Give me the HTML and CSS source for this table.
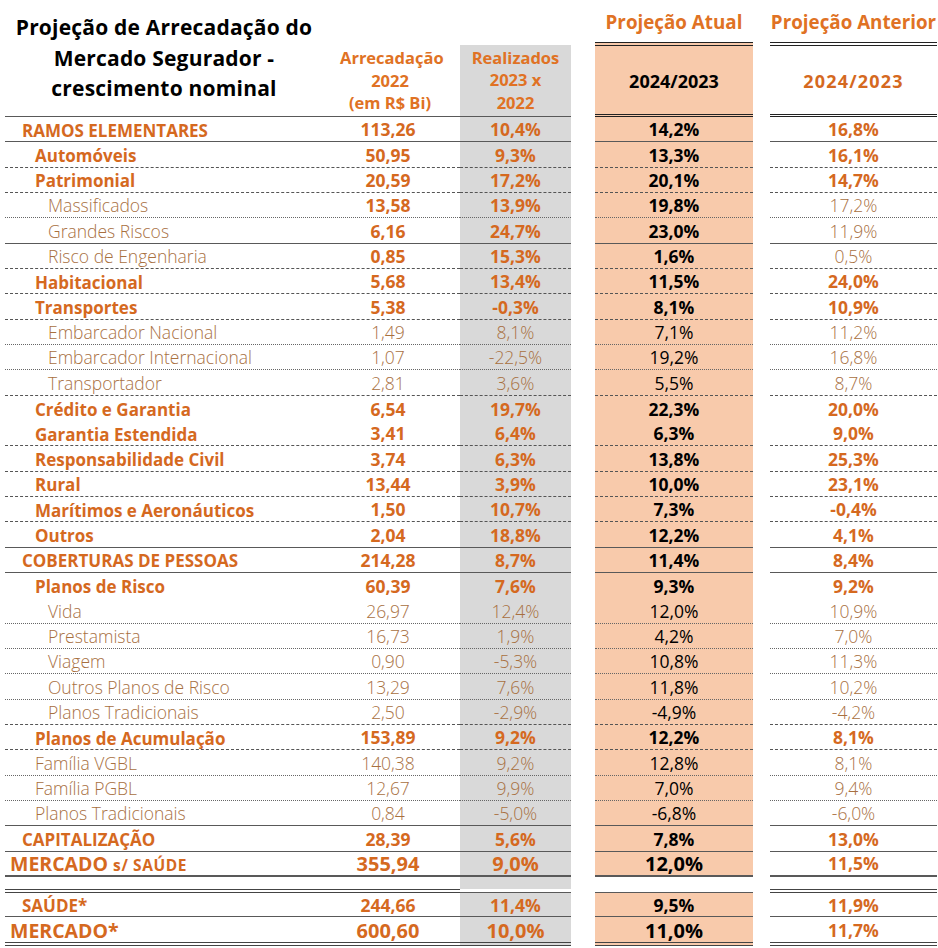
FILE: index.html
```html
<!DOCTYPE html>
<html lang="pt-BR">
<head>
<meta charset="utf-8">
<title>Projeção de Arrecadação do Mercado Segurador</title>
<link rel="stylesheet" href="styles.css">
</head>
<body>
<div class="sheet">
  <div class="head">
    <div class="h-main">
      <div class="title">Projeção de Arrecadação do<br>Mercado Segurador -<br>crescimento nominal</div>
      <div class="h-arrec">Arrecadação<br>2022<br>(em R$ Bi)</div>
    </div>
    <div class="h-gray">Realizados<br>2023 x<br>2022</div>
    <div class="h-gap"></div>
    <div class="h-top h-top-p">Projeção Atual</div>
    <div class="h-gap2"></div>
    <div class="h-top h-top-a">Projeção Anterior</div>
    <div class="h-peach">2024/2023</div>
    <div class="h-ant">2024/2023</div>
  </div>

  <div class="row solid"><div class="c main l0"><span class="lab b">RAMOS ELEMENTARES</span><span class="val b">113,26</span></div><div class="c gray b">10,4%</div><div class="gap"></div><div class="c peach b">14,2%</div><div class="gap"></div><div class="c ant b">16,8%</div></div>
  <div class="row dash"><div class="c main l1"><span class="lab b">Automóveis</span><span class="val b">50,95</span></div><div class="c gray b">9,3%</div><div class="gap"></div><div class="c peach b">13,3%</div><div class="gap"></div><div class="c ant b">16,1%</div></div>
  <div class="row dash"><div class="c main l1"><span class="lab b">Patrimonial</span><span class="val b">20,59</span></div><div class="c gray b">17,2%</div><div class="gap"></div><div class="c peach b">20,1%</div><div class="gap"></div><div class="c ant b">14,7%</div></div>
  <div class="row dot"><div class="c main l2"><span class="lab lt">Massificados</span><span class="val b">13,58</span></div><div class="c gray b">13,9%</div><div class="gap"></div><div class="c peach b">19,8%</div><div class="gap"></div><div class="c ant lt">17,2%</div></div>
  <div class="row solid"><div class="c main l2"><span class="lab lt">Grandes Riscos</span><span class="val b">6,16</span></div><div class="c gray b">24,7%</div><div class="gap"></div><div class="c peach b">23,0%</div><div class="gap"></div><div class="c ant lt">11,9%</div></div>
  <div class="row dash"><div class="c main l2"><span class="lab lt">Risco de Engenharia</span><span class="val b">0,85</span></div><div class="c gray b">15,3%</div><div class="gap"></div><div class="c peach b">1,6%</div><div class="gap"></div><div class="c ant lt">0,5%</div></div>
  <div class="row dash"><div class="c main l1"><span class="lab b">Habitacional</span><span class="val b">5,68</span></div><div class="c gray b">13,4%</div><div class="gap"></div><div class="c peach b">11,5%</div><div class="gap"></div><div class="c ant b">24,0%</div></div>
  <div class="row dash"><div class="c main l1"><span class="lab b">Transportes</span><span class="val b">5,38</span></div><div class="c gray b">-0,3%</div><div class="gap"></div><div class="c peach b">8,1%</div><div class="gap"></div><div class="c ant b">10,9%</div></div>
  <div class="row dot"><div class="c main l2"><span class="lab lt">Embarcador Nacional</span><span class="val lt">1,49</span></div><div class="c gray lt">8,1%</div><div class="gap"></div><div class="c peach lt">7,1%</div><div class="gap"></div><div class="c ant lt">11,2%</div></div>
  <div class="row dot"><div class="c main l2"><span class="lab lt">Embarcador Internacional</span><span class="val lt">1,07</span></div><div class="c gray lt">-22,5%</div><div class="gap"></div><div class="c peach lt">19,2%</div><div class="gap"></div><div class="c ant lt">16,8%</div></div>
  <div class="row dash"><div class="c main l2"><span class="lab lt">Transportador</span><span class="val lt">2,81</span></div><div class="c gray lt">3,6%</div><div class="gap"></div><div class="c peach lt">5,5%</div><div class="gap"></div><div class="c ant lt">8,7%</div></div>
  <div class="row none"><div class="c main l1"><span class="lab b">Crédito e Garantia</span><span class="val b">6,54</span></div><div class="c gray b">19,7%</div><div class="gap"></div><div class="c peach b">22,3%</div><div class="gap"></div><div class="c ant b">20,0%</div></div>
  <div class="row dash"><div class="c main l1"><span class="lab b">Garantia Estendida</span><span class="val b">3,41</span></div><div class="c gray b">6,4%</div><div class="gap"></div><div class="c peach b">6,3%</div><div class="gap"></div><div class="c ant b">9,0%</div></div>
  <div class="row dash"><div class="c main l1"><span class="lab b">Responsabilidade Civil</span><span class="val b">3,74</span></div><div class="c gray b">6,3%</div><div class="gap"></div><div class="c peach b">13,8%</div><div class="gap"></div><div class="c ant b">25,3%</div></div>
  <div class="row dash"><div class="c main l1"><span class="lab b">Rural</span><span class="val b">13,44</span></div><div class="c gray b">3,9%</div><div class="gap"></div><div class="c peach b">10,0%</div><div class="gap"></div><div class="c ant b">23,1%</div></div>
  <div class="row dash"><div class="c main l1"><span class="lab b">Marítimos e Aeronáuticos</span><span class="val b">1,50</span></div><div class="c gray b">10,7%</div><div class="gap"></div><div class="c peach b">7,3%</div><div class="gap"></div><div class="c ant b">-0,4%</div></div>
  <div class="row solid"><div class="c main l1"><span class="lab b">Outros</span><span class="val b">2,04</span></div><div class="c gray b">18,8%</div><div class="gap"></div><div class="c peach b">12,2%</div><div class="gap"></div><div class="c ant b">4,1%</div></div>
  <div class="row solid"><div class="c main l0"><span class="lab b">COBERTURAS DE PESSOAS</span><span class="val b">214,28</span></div><div class="c gray b">8,7%</div><div class="gap"></div><div class="c peach b">11,4%</div><div class="gap"></div><div class="c ant b">8,4%</div></div>
  <div class="row none"><div class="c main l1"><span class="lab b">Planos de Risco</span><span class="val b">60,39</span></div><div class="c gray b">7,6%</div><div class="gap"></div><div class="c peach b">9,3%</div><div class="gap"></div><div class="c ant b">9,2%</div></div>
  <div class="row dot"><div class="c main l2"><span class="lab lt">Vida</span><span class="val lt">26,97</span></div><div class="c gray lt">12,4%</div><div class="gap"></div><div class="c peach lt">12,0%</div><div class="gap"></div><div class="c ant lt">10,9%</div></div>
  <div class="row dot"><div class="c main l2"><span class="lab lt">Prestamista</span><span class="val lt">16,73</span></div><div class="c gray lt">1,9%</div><div class="gap"></div><div class="c peach lt">4,2%</div><div class="gap"></div><div class="c ant lt">7,0%</div></div>
  <div class="row dot"><div class="c main l2"><span class="lab lt">Viagem</span><span class="val lt">0,90</span></div><div class="c gray lt">-5,3%</div><div class="gap"></div><div class="c peach lt">10,8%</div><div class="gap"></div><div class="c ant lt">11,3%</div></div>
  <div class="row dot"><div class="c main l2"><span class="lab lt">Outros Planos de Risco</span><span class="val lt">13,29</span></div><div class="c gray lt">7,6%</div><div class="gap"></div><div class="c peach lt">11,8%</div><div class="gap"></div><div class="c ant lt">10,2%</div></div>
  <div class="row dash"><div class="c main l2"><span class="lab lt">Planos Tradicionais</span><span class="val lt">2,50</span></div><div class="c gray lt">-2,9%</div><div class="gap"></div><div class="c peach lt">-4,9%</div><div class="gap"></div><div class="c ant lt">-4,2%</div></div>
  <div class="row dash"><div class="c main l1"><span class="lab b">Planos de Acumulação</span><span class="val b">153,89</span></div><div class="c gray b">9,2%</div><div class="gap"></div><div class="c peach b">12,2%</div><div class="gap"></div><div class="c ant b">8,1%</div></div>
  <div class="row dot"><div class="c main l1"><span class="lab lt">Família VGBL</span><span class="val lt">140,38</span></div><div class="c gray lt">9,2%</div><div class="gap"></div><div class="c peach lt">12,8%</div><div class="gap"></div><div class="c ant lt">8,1%</div></div>
  <div class="row dot"><div class="c main l1"><span class="lab lt">Família PGBL</span><span class="val lt">12,67</span></div><div class="c gray lt">9,9%</div><div class="gap"></div><div class="c peach lt">7,0%</div><div class="gap"></div><div class="c ant lt">9,4%</div></div>
  <div class="row solid"><div class="c main l1"><span class="lab lt">Planos Tradicionais</span><span class="val lt">0,84</span></div><div class="c gray lt">-5,0%</div><div class="gap"></div><div class="c peach lt">-6,8%</div><div class="gap"></div><div class="c ant lt">-6,0%</div></div>
  <div class="row solid"><div class="c main l0"><span class="lab b">CAPITALIZAÇÃO</span><span class="val b">28,39</span></div><div class="c gray b">5,6%</div><div class="gap"></div><div class="c peach b">7,8%</div><div class="gap"></div><div class="c ant b">13,0%</div></div>
  <div class="row thick big"><div class="c main lx"><span class="lab b">MERCADO <small>s/ SAÚDE</small></span><span class="val b">355,94</span></div><div class="c gray b">9,0%</div><div class="gap"></div><div class="c peach b">12,0%</div><div class="gap"></div><div class="c ant b">11,5%</div></div>

  <div class="spacer"><div class="sp-main"></div><div class="sp-gray"></div><div></div><div></div><div></div><div></div></div>

  <div class="row solid first"><div class="c main l0"><span class="lab b">SAÚDE*</span><span class="val b">244,66</span></div><div class="c gray b">11,4%</div><div class="gap"></div><div class="c peach b">9,5%</div><div class="gap"></div><div class="c ant b">11,9%</div></div>
  <div class="row double big"><div class="c main lx"><span class="lab b">MERCADO*</span><span class="val b">600,60</span></div><div class="c gray b">10,0%</div><div class="gap"></div><div class="c peach b">11,0%</div><div class="gap"></div><div class="c ant b">11,7%</div></div>
</div>
</body>
</html>
```

FILE: styles.css
```css
html, body {
  margin: 0;
  padding: 0;
  background: #ffffff;
}

body {
  font-family: "Open Sans", "Noto Sans", sans-serif;
  color: #d5691f;
}

.sheet {
  padding-left: 5px;
  width: 932px;
}

/* ---------- header ---------- */
.head {
  display: grid;
  grid-template-columns: 455px 111px 24px 158px 17px 167px;
  grid-template-rows: 42px 75px;
}

.h-main {
  grid-column: 1;
  grid-row: 1 / 3;
  display: flex;
  border-bottom: 1px solid #595959;
}

.title {
  width: 318px;
  padding-top: 12px;
  text-align: center;
  color: #000;
  font-weight: 700;
  font-size: 21px;
  letter-spacing: 0.2px;
  line-height: 30.5px;
  white-space: nowrap;
}

.h-arrec {
  width: 100px;
  margin-left: 17px;
  padding-top: 47px;
  text-align: center;
  font-weight: 700;
  font-size: 16.5px;
  line-height: 22.5px;
  color: #e07224;
  white-space: nowrap;
}

.h-gray {
  grid-column: 2;
  grid-row: 2;
  margin-top: 3px;
  background: #d9d9d9;
  border-bottom: 1px solid #595959;
  display: flex;
  align-items: center;
  justify-content: center;
  text-align: center;
  font-weight: 700;
  font-size: 16.5px;
  line-height: 22.5px;
  color: #e07224;
}

.h-gap { grid-column: 3; grid-row: 1 / 3; }
.h-gap2 { grid-column: 5; grid-row: 1 / 3; }

.h-top {
  grid-row: 1;
  display: flex;
  align-items: flex-start;
  justify-content: center;
  padding-top: 9px;
  font-weight: 700;
  font-size: 18.8px;
  line-height: 26px;
  color: #e07224;
  white-space: nowrap;
}

.h-top-p { grid-column: 4; }
.h-top-a { grid-column: 6; }

.h-peach,
.h-ant {
  grid-row: 2;
  display: flex;
  align-items: center;
  justify-content: center;
  padding-top: 2px;
  border-top: 4px double #222;
  border-bottom: 3px double #222;
  font-weight: 700;
  font-size: 18px;
}

.h-peach {
  grid-column: 4;
  background: #f8caab;
  color: #000;
}

.h-ant {
  grid-column: 6;
  color: #d5691f;
  letter-spacing: 1.2px;
}

/* ---------- rows ---------- */
.row {
  display: grid;
  grid-template-columns: 455px 111px 24px 158px 17px 167px;
  height: 25.33px;
}

.c {
  box-sizing: border-box;
  display: flex;
  align-items: center;
  justify-content: center;
  padding-top: 2px;
  font-size: 17.5px;
  line-height: 1;
  white-space: nowrap;
}

.main {
  justify-content: flex-start;
}

.main .lab {
  flex: 1;
}

.main .val {
  width: 100px;
  margin-right: 22px;
  text-align: center;
}

.l0 { padding-left: 17px; }
.l1 { padding-left: 30px; }
.l2 { padding-left: 43px; }
.lx { padding-left: 5px; }

.gray { background: #d9d9d9; }
.peach { background: #f8caab; }

.b {
  font-weight: 700;
  color: #d5691f;
}

.main .lab.b {
  font-size: 17px;
}

.lt {
  font-weight: 300;
  color: #a8703f;
}

.peach.b { color: #000; }
.peach.lt { color: #000; font-weight: 400; }

.big .main .lab.b {
  font-size: 19.5px;
}

.big .main .val,
.big.row .gray,
.big.row .peach {
  font-size: 20px;
}

.big .main .lab small {
  font-size: 15.5px;
  letter-spacing: 0.6px;
}

.row.solid .c { border-bottom: 1px solid #595959; }
.row.dash .c { border-bottom: 1px dashed #555; }
.row.dot .c { border-bottom: 1px dotted #666; }
.row.thick .c { border-bottom: 2px solid #595959; }
.row.double .c { border-bottom: 4px double #444; }
.row.double { height: 29px; }

.row.first .main,
.row.first .ant {
  border-top: 4px double #444;
}
.row.first .gray,
.row.first .peach {
  border-top: 1px solid #595959;
  margin-top: 3px;
}
.row.first { height: 28.5px; }

.spacer {
  display: grid;
  grid-template-columns: 455px 111px 24px 158px 17px 167px;
  height: 12px;
}

.sp-gray { background: #d9d9d9; }
```
